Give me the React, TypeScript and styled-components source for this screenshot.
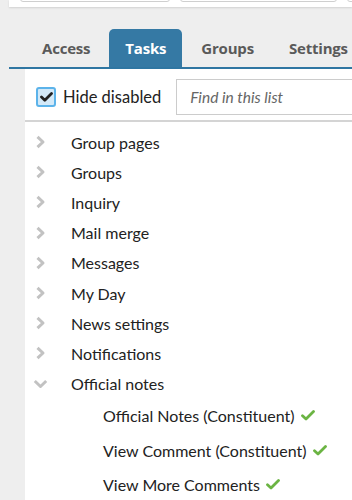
import styled, { createGlobalStyle } from 'styled-components';

const GlobalStyle = createGlobalStyle`
  body {
    margin: 0;
    background: #eeeeee;
    font-family: Lato, "Open Sans", "Liberation Sans", sans-serif;
  }
`;

const Page = styled.div`
  width: 352px;
  height: 500px;
  overflow: hidden;
  background: #eeeeee;
`;

const TopPanel = styled.div`
  margin-left: 9px;
  height: 7px;
  background: #ffffff;
  box-shadow: 0 1px 2px rgba(0, 0, 0, 0.12);
  display: flex;
  align-items: flex-end;
  gap: 10px;
  padding: 0 0 5px 11px;
  box-sizing: border-box;
  overflow: hidden;
`;

const TopField = styled.div<{ $w: number }>`
  flex: 0 0 ${({ $w }) => $w}px;
  height: 30px;
  border: 1px solid #cfcfcf;
  border-radius: 3px;
  box-sizing: border-box;
`;

const TabBar = styled.div`
  margin: 22px 0 0 9px;
  padding-left: 17px;
  display: flex;
  gap: 3px;
  border-bottom: 2px solid #2f76a2;
  white-space: nowrap;
`;

const Tab = styled.div<{ $active?: boolean }>`
  height: 38px;
  padding: 0 16px;
  display: flex;
  align-items: center;
  font-family: "Open Sans", Lato, sans-serif;
  font-size: 15px;
  font-weight: 700;
  letter-spacing: -0.2px;
  border-radius: 5px 5px 0 0;
  color: ${({ $active }) => ($active ? '#ffffff' : '#5a5a5a')};
  background: ${({ $active }) => ($active ? '#3579a4' : 'transparent')};
`;

const Panel = styled.div`
  margin-left: 25px;
  background: #ffffff;
  min-height: 440px;
`;

const Toolbar = styled.div`
  height: 51px;
  display: flex;
  align-items: center;
  padding-left: 11px;
`;

const CheckLabel = styled.label`
  display: flex;
  align-items: center;
  gap: 7px;
  font-size: 16.5px;
  color: #222222;
  margin-top: 4px;
`;

const Box = styled.span`
  width: 20px;
  height: 20px;
  box-sizing: border-box;
  border: 2px solid #5cb3ea;
  border-radius: 3px;
  background: #d3e9f8;
  display: flex;
  align-items: center;
  justify-content: center;
`;

const Search = styled.div`
  margin-left: 15px;
  flex: 1;
  height: 36px;
  margin-top: 4px;
  border: 1px solid #cccccc;
  border-right: none;
  box-sizing: border-box;
  display: flex;
  align-items: center;
  padding-left: 13px;
  font-size: 15.5px;
  font-style: italic;
  color: #666666;
  white-space: nowrap;
`;

const List = styled.div`
  border-top: 2px solid #d4d4d4;
  padding-top: 5px;
`;

const Row = styled.div`
  height: 30.2px;
  display: flex;
  align-items: center;
  font-size: 16px;
  color: #222222;
`;

const Chevron = styled.span<{ $open?: boolean }>`
  width: 46px;
  padding-left: ${({ $open }) => ($open ? 8 : 10)}px;
  box-sizing: border-box;
  display: flex;
  align-items: center;
`;

const SubRow = styled.div`
  height: 34.5px;
  display: flex;
  align-items: center;
  padding-left: 78px;
  gap: 6px;
  font-size: 16px;
  color: #222222;
  white-space: nowrap;
`;

const Tick = () => (
  <svg width="14" height="11" viewBox="0 0 14 11">
    <path d="M1.5 5.8 L5 9 L12.5 1.5" fill="none" stroke="#6bb443" strokeWidth="2.8" strokeLinecap="round" strokeLinejoin="round" />
  </svg>
);

const Right = () => (
  <svg width="11" height="14" viewBox="0 0 11 14">
    <path d="M2.5 1.8 L8 7 L2.5 12.2" fill="none" stroke="#c2c2c2" strokeWidth="3" strokeLinejoin="round" />
  </svg>
);

const Down = () => (
  <svg width="15" height="10" viewBox="0 0 15 10">
    <path d="M1.8 2 L7.5 7.5 L13.2 2" fill="none" stroke="#c2c2c2" strokeWidth="3" strokeLinejoin="round" />
  </svg>
);

const groups = ['Group pages', 'Groups', 'Inquiry', 'Mail merge', 'Messages', 'My Day', 'News settings', 'Notifications'];
const notes = ['Official Notes (Constituent)', 'View Comment (Constituent)', 'View More Comments'];

export default function App() {
  return (
    <Page>
      <GlobalStyle />
      <TopPanel>
        <TopField $w={150} />
        <TopField $w={157} />
        <TopField $w={40} />
      </TopPanel>
      <TabBar>
        <Tab>Access</Tab>
        <Tab $active>Tasks</Tab>
        <Tab>Groups</Tab>
        <Tab>Settings</Tab>
      </TabBar>
      <Panel>
        <Toolbar>
          <CheckLabel>
            <Box>
              <svg width="13" height="10" viewBox="0 0 13 10">
                <path d="M1.5 5 L4.8 8.2 L11.5 1.6" fill="none" stroke="#222" strokeWidth="2.8" strokeLinecap="round" strokeLinejoin="round" />
              </svg>
            </Box>
            Hide disabled
          </CheckLabel>
          <Search>Find in this list</Search>
        </Toolbar>
        <List>
          {groups.map((g) => (
            <Row key={g}>
              <Chevron><Right /></Chevron>
              {g}
            </Row>
          ))}
          <Row>
            <Chevron $open><Down /></Chevron>
            Official notes
          </Row>
          {notes.map((n) => (
            <SubRow key={n}>
              {n}
              <Tick />
            </SubRow>
          ))}
        </List>
      </Panel>
    </Page>
  );
}
